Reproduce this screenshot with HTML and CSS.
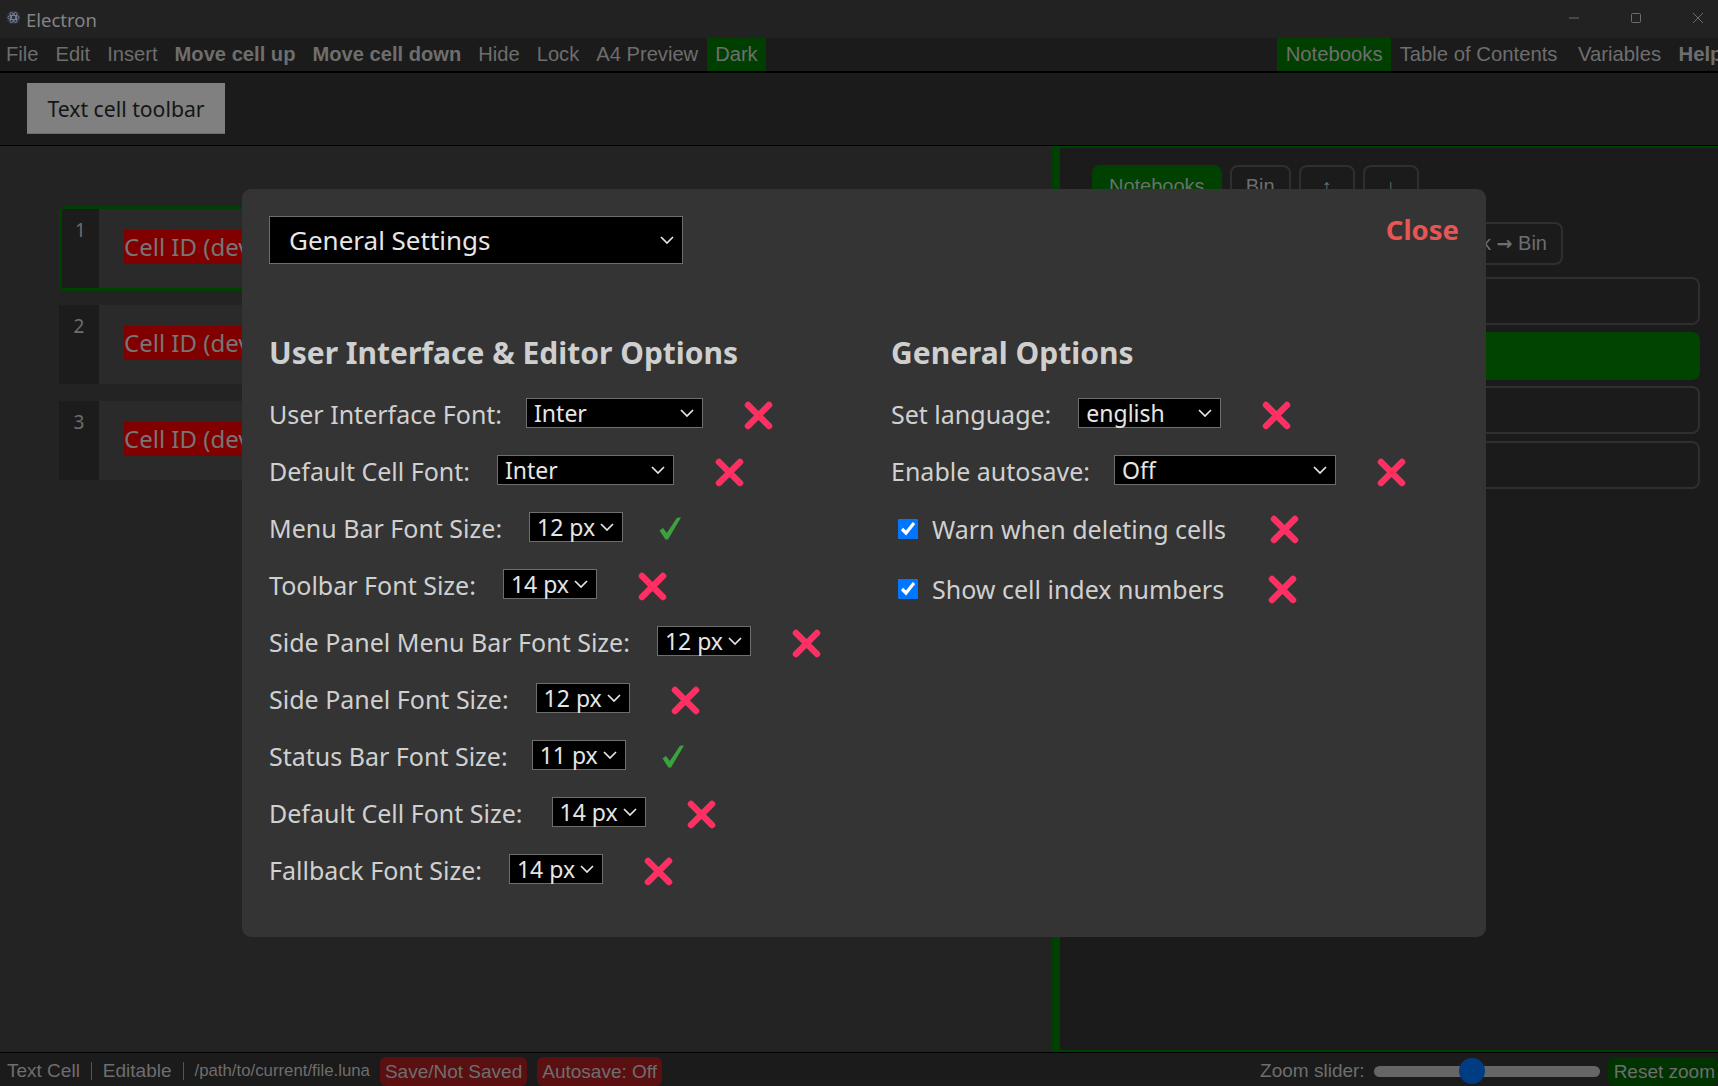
FILE: index.html
```html
<!DOCTYPE html>
<html>
<head>
<meta charset="utf-8">
<title>Electron</title>
<link rel="stylesheet" href="styles.css">
</head>
<body>
<svg class="defs" width="0" height="0">
  <symbol id="chev" viewBox="0 0 14 8"><path d="M1 1l6 6 6-6" fill="none" stroke="currentColor" stroke-width="1.7"/></symbol>
  <symbol id="cross" viewBox="0 0 29 29"><path d="M4 4l21 21M25 4L4 25" fill="none" stroke="#ff2e63" stroke-width="6.5" stroke-linecap="round"/></symbol>
  <symbol id="tick" viewBox="0 0 22 23"><path d="M0.5 13.5L4 11l3.8 5L18 0.8 22 0.5 9 22.5H6.5z" fill="#3aa33f"/></symbol>
</svg>

<header class="titlebar">
  <svg class="app-icon" viewBox="0 0 16 16"><circle cx="8" cy="8" r="7.5" fill="#2c2f3c"/><g fill="none" stroke="#8f97a8" stroke-width=".8"><ellipse cx="8" cy="8" rx="6" ry="2.4"/><ellipse cx="8" cy="8" rx="6" ry="2.4" transform="rotate(60 8 8)"/><ellipse cx="8" cy="8" rx="6" ry="2.4" transform="rotate(120 8 8)"/></g></svg>
  <span class="app-name">Electron</span>
  <div class="win-buttons">
    <svg width="12" height="12" viewBox="0 0 12 12"><path d="M1 6h10" stroke="#6c6c6c"/></svg>
    <svg width="12" height="12" viewBox="0 0 12 12"><rect x="1.5" y="1.5" width="9" height="9" rx="1" fill="none" stroke="#6c6c6c"/></svg>
    <svg width="12" height="12" viewBox="0 0 12 12"><path d="M1 1l10 10M11 1L1 11" stroke="#6c6c6c"/></svg>
  </div>
</header>

<nav class="menubar">
  <a>File</a><a>Edit</a><a>Insert</a><a class="strong">Move cell up</a><a class="strong">Move cell down</a><a>Hide</a><a>Lock</a><a>A4 Preview</a><a class="on">Dark</a>
  <span class="spacer"></span>
  <a class="on panels">Notebooks</a><a class="panels toc">Table of Contents</a><a class="panels vars">Variables</a><a class="panels strong help">Help</a>
</nav>

<div class="toolbar"><button class="tool-btn">Text cell toolbar</button></div>

<main class="main">
  <section class="cells">
    <div class="cell active"><div class="cell-index">1</div><div class="cell-body"><span class="cell-id">Cell ID (dev mode)</span></div></div>
    <div class="cell"><div class="cell-index">2</div><div class="cell-body"><span class="cell-id">Cell ID (dev mode)</span></div></div>
    <div class="cell"><div class="cell-index">3</div><div class="cell-body"><span class="cell-id">Cell ID (dev mode)</span></div></div>
  </section>
  <aside class="side">
    <div class="side-tabs"><span class="side-tab on">Notebooks</span><span class="side-tab">Bin</span><span class="side-tab arrow">↑</span><span class="side-tab arrow">↓</span></div>
    <div class="side-actions"><span class="side-tab">Notebook <b class="arr">→</b> Bin</span></div>
    <div class="side-row"></div>
    <div class="side-row on"></div>
    <div class="side-row"></div>
    <div class="side-row"></div>
  </aside>
</main>

<footer class="statusbar">
  <span>Text Cell</span><i class="sep"></i><span>Editable</span><i class="sep"></i><span class="path">/path/to/current/file.luna</span>
  <span class="pill red">Save/Not Saved</span><span class="pill red">Autosave: Off</span>
  <span class="spacer"></span>
  <span>Zoom slider:</span>
  <div class="slider"><div class="thumb"></div></div>
  <span class="pill green">Reset zoom</span>
</footer>

<div class="modal">
  <div class="modal-head">
    <div class="select w-main"><span>General Settings</span><svg class="chev"><use href="#chev"/></svg></div>
    <a class="close">Close</a>
  </div>
  <div class="columns">
    <div class="col-left">
      <h2>User Interface &amp; Editor Options</h2>
      <div class="row tight"><label>User Interface Font:</label><div class="select w-font"><span>Inter</span><svg class="chev"><use href="#chev"/></svg></div><svg class="mark"><use href="#cross"/></svg></div>
      <div class="row"><label>Default Cell Font:</label><div class="select w-font"><span>Inter</span><svg class="chev"><use href="#chev"/></svg></div><svg class="mark"><use href="#cross"/></svg></div>
      <div class="row"><label>Menu Bar Font Size:</label><div class="select w-size"><span>12 px</span><svg class="chev"><use href="#chev"/></svg></div><svg class="mark ok"><use href="#tick"/></svg></div>
      <div class="row"><label>Toolbar Font Size:</label><div class="select w-size"><span>14 px</span><svg class="chev"><use href="#chev"/></svg></div><svg class="mark"><use href="#cross"/></svg></div>
      <div class="row"><label>Side Panel Menu Bar Font Size:</label><div class="select w-size"><span>12 px</span><svg class="chev"><use href="#chev"/></svg></div><svg class="mark"><use href="#cross"/></svg></div>
      <div class="row"><label>Side Panel Font Size:</label><div class="select w-size"><span>12 px</span><svg class="chev"><use href="#chev"/></svg></div><svg class="mark"><use href="#cross"/></svg></div>
      <div class="row tight"><label>Status Bar Font Size:</label><div class="select w-size"><span>11 px</span><svg class="chev"><use href="#chev"/></svg></div><svg class="mark ok"><use href="#tick"/></svg></div>
      <div class="row wide"><label>Default Cell Font Size:</label><div class="select w-size"><span>14 px</span><svg class="chev"><use href="#chev"/></svg></div><svg class="mark"><use href="#cross"/></svg></div>
      <div class="row"><label>Fallback Font Size:</label><div class="select w-size"><span>14 px</span><svg class="chev"><use href="#chev"/></svg></div><svg class="mark"><use href="#cross"/></svg></div>
    </div>
    <div class="col-right">
      <h2>General Options</h2>
      <div class="row"><label>Set language:</label><div class="select w-lang"><span>english</span><svg class="chev"><use href="#chev"/></svg></div><svg class="mark"><use href="#cross"/></svg></div>
      <div class="row tight"><label>Enable autosave:</label><div class="select w-auto"><span>Off</span><svg class="chev"><use href="#chev"/></svg></div><svg class="mark"><use href="#cross"/></svg></div>
      <div class="row check"><input type="checkbox" checked><label>Warn when deleting cells</label><svg class="mark"><use href="#cross"/></svg></div>
      <div class="row check"><input type="checkbox" checked><label>Show cell index numbers</label><svg class="mark"><use href="#cross"/></svg></div>
    </div>
  </div>
</div>
</body>
</html>
```

FILE: styles.css
```css
html, body {
  margin: 0;
  height: 100%;
}
body {
  display: flex;
  flex-direction: column;
  height: 1086px;
  overflow: hidden;
  position: relative;
  background: #232323;
  color: #6e6e6e;
  font-family: "Liberation Sans", Arial, sans-serif;
  font-size: 20px;
}
.defs {
  position: absolute;
}
.spacer {
  flex: 1;
}

.titlebar {
  display: flex;
  align-items: center;
  height: 38px;
  flex: none;
  background: #222;
}
.app-icon {
  width: 15px;
  height: 15px;
  margin: -3px 5px 0 6px;
}
.app-name {
  font-family: "Noto Sans", sans-serif;
  font-size: 18.5px;
  color: #848484;
}
.win-buttons {
  margin-left: auto;
  margin-right: 14px;
  display: flex;
  gap: 50px;
}
.win-buttons svg {
  display: block;
  margin-top: -3px;
}

.menubar {
  display: flex;
  flex: none;
  height: 33px;
  background: #1b1b1b;
  border-bottom: 2px solid #000;
  white-space: nowrap;
  overflow: hidden;
}
.menubar a {
  flex: none;
  padding: 0 8.5px;
  line-height: 33px;
  font-size: 20.15px;
}
.menubar a:first-child {
  padding-left: 6px;
}
.menubar .strong {
  font-weight: bold;
}
.menubar .on {
  background: #003f00;
}
.menubar .panels {
  font-size: 20.3px;
}
.menubar .toc {
  padding-right: 11.5px;
}
.menubar .vars {
  padding: 0 9px;
}
.menubar .help {
  margin-right: -13px;
}

.toolbar {
  flex: none;
  height: 73px;
  box-sizing: border-box;
  padding: 10px 27px;
  background: #1b1b1b;
  border-bottom: 1px solid #000;
}
.tool-btn {
  display: block;
  width: 198px;
  height: 51px;
  padding: 0;
  border: 0;
  border-bottom: 1px solid #6c6c6c;
  background: #808080;
  color: #151515;
  font-family: "Noto Sans", sans-serif;
  font-size: 21.2px;
}

.main {
  flex: 1;
  display: flex;
  min-height: 0;
}
.cells {
  flex: 1;
  padding: 60px 12px 0 59px;
}
.cell {
  display: flex;
  height: 79px;
  margin-bottom: 17px;
  background: #2a2a2a;
}
.cell.active {
  border: 3px solid #004000;
  border-radius: 6px;
  margin: 0 -3px 14px 0;
}
.cell.active .cell-index {
  width: 37px;
}
.cell-index {
  width: 40px;
  background: #1c1c1c;
  text-align: center;
  padding-top: 8px;
  box-sizing: border-box;
  font-size: 19px;
  color: #6e6e6e;
  font-family: "Noto Sans", sans-serif;
}
.cell-body {
  padding-top: 21px;
  padding-left: 25px;
}
.cell-id {
  display: inline-block;
  height: 34px;
  line-height: 34px;
  padding-right: 8px;
  background: #800000;
  color: #757575;
  font-family: "Noto Sans", sans-serif;
  font-size: 24px;
}

.side {
  width: 666px;
  flex: none;
  box-sizing: border-box;
  padding: 17px 18px 0 32px;
  background: #1b1b1b;
  border-left: 8px solid #004000;
  border-top: 2px solid #004000;
  border-bottom: 2px solid #004000;
}
.side-tabs {
  display: flex;
  gap: 8px;
  height: 57px;
}
.side-tab {
  display: inline-block;
  box-sizing: border-box;
  height: 43px;
  line-height: 39px;
  padding: 0 14px;
  border: 2px solid #2f2f2f;
  border-radius: 8px;
  white-space: nowrap;
}
.side-tab.on {
  background: #004000;
  border-color: #004000;
  padding: 0 15px;
}
.side-tab.arrow {
  width: 56px;
  text-align: center;
}
.arr {
  font-family: "DejaVu Sans", sans-serif;
  font-size: 19px;
}
.side-actions {
  display: flex;
  justify-content: flex-end;
  height: 55px;
  padding-right: 137px;
}
.side-row {
  box-sizing: border-box;
  height: 48px;
  margin-bottom: 6.5px;
  border: 2px solid #2f2f2f;
  border-radius: 8px;
}
.side-row.on {
  background: #004400;
  border-color: #004400;
}

.statusbar {
  display: flex;
  align-items: center;
  flex: none;
  height: 34px;
  box-sizing: border-box;
  border-top: 1px solid #000;
  padding: 3px 3px 0 7px;
  background: #1b1b1b;
  font-size: 19px;
  white-space: nowrap;
  overflow: hidden;
}
.sep {
  width: 1px;
  height: 18px;
  margin: 0 11px;
  background: #555;
}
.path {
  font-size: 16.8px;
  margin-right: 10px;
}
.pill {
  height: 29px;
  line-height: 29px;
  padding: 0 5px;
  border-radius: 6px;
}
.pill.red {
  background: #5a1010;
  margin-right: 10px;
}
.pill.green {
  background: #003300;
  padding: 0 3px 0 6px;
  margin-right: -3px;
}
.slider {
  position: relative;
  width: 226px;
  height: 11px;
  margin: 0 8px 0 9px;
  border-radius: 6px;
  background: #666;
}
.thumb {
  position: absolute;
  left: 85px;
  top: -8px;
  width: 26px;
  height: 26px;
  border-radius: 50%;
  background: #003c82;
}

.modal {
  position: absolute;
  left: 242px;
  top: 189px;
  width: 1244px;
  height: 748px;
  box-sizing: border-box;
  padding: 27px 27px 0;
  border-radius: 9px;
  background: #343434;
  color: #d0d0d0;
  font-family: "Noto Sans", sans-serif;
}
.modal-head {
  display: flex;
  justify-content: space-between;
  height: 112px;
}
.modal-head .select {
  margin-top: 0;
}
.close {
  font-size: 27.5px;
  font-weight: bold;
  color: #e85555;
  line-height: 28px;
}
.columns {
  display: flex;
}
.col-left {
  width: 622px;
}
.col-right {
  flex: 1;
}
h2 {
  margin: 0 0 7px;
  font-size: 30px;
  line-height: 50px;
  font-weight: bold;
  color: #cfcfcf;
}
.row {
  display: flex;
  align-items: center;
  height: 57px;
  font-size: 25px;
}
.row label {
  margin-right: 27px;
}
.row.tight label {
  margin-right: 24px;
}
.row.wide label {
  margin-right: 29px;
}
.row.check {
  height: 60px;
}
.row.check input {
  width: 20px;
  height: 20px;
  margin: 0 14px 0 7px;
  accent-color: #0075ff;
}
.select {
  display: flex;
  align-items: center;
  justify-content: space-between;
  box-sizing: border-box;
  height: 30px;
  padding: 0 8px 0 7px;
  margin-top: -2px;
  border: 1px solid #6e6e6e;
  background: #000;
  color: #e6e6e6;
  font-size: 23px;
}
.w-main {
  width: 414px;
  height: 48px;
  padding: 0 8px 0 19px;
  font-size: 26px;
}
.w-font {
  width: 177px;
}
.w-size {
  width: 94px;
}
.w-lang {
  width: 143px;
}
.w-auto {
  width: 222px;
}
.chev {
  width: 14px;
  height: 8px;
  flex: none;
}
.mark {
  width: 29px;
  height: 29px;
  margin-top: 3px;
  margin-left: 41px;
  flex: none;
}
.mark.ok {
  width: 22px;
  height: 23px;
  margin-top: 2px;
  margin-left: 36px;
}
.row.check .mark {
  margin-top: 1px;
  margin-left: 17px;
}
```
